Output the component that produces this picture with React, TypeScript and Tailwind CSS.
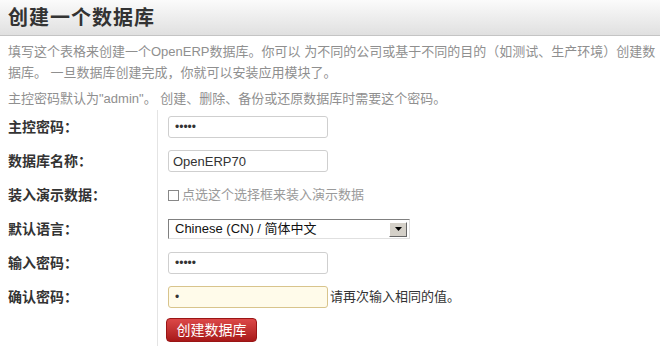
const cjk = 'font-["Liberation_Sans","Noto_Sans_CJK_SC",sans-serif]';

function Row({ label, children }: { label: string; children: React.ReactNode }) {
  return (
    <>
      <div className="flex h-[34px] items-center pl-[8px] text-[14px] font-bold text-[#333]">
        {label}
      </div>
      <div className="flex h-[34px] items-center border-l border-[#e4e4e4] pl-[10px]">
        {children}
      </div>
    </>
  );
}

export default function App() {
  return (
    <div className={`h-[361px] w-[664px] overflow-hidden bg-white ${cjk}`}>
      <div className="flex h-[36px] w-[660px] items-center border-b border-[#c4c4c4] bg-gradient-to-b from-[#fbfbfb] to-[#e0e0e0] pl-[8px]">
        <h1 className="text-[20px] font-bold tracking-[1px] text-[#333]">创建一个数据库</h1>
      </div>

      <div className="px-[8px] pt-[5px] text-[13px] leading-[21px] text-[#8f8f8f]">
        <p>
          填写这个表格来创建一个OpenERP数据库。你可以 为不同的公司或基于不同的目的（如测试、生产环境）创建数据库。 一旦数据库创建完成，你就可以安装应用模块了。
        </p>
        <p className="mt-[5px]">主控密码默认为"admin"。 创建、删除、备份或还原数据库时需要这个密码。</p>
      </div>

      <div className="mt-[1px] grid grid-cols-[157px_1fr]">
        <Row label="主控密码：">
          <input
            type="password"
            defaultValue="admin"
            className="h-[22px] w-[160px] rounded-[3px] border border-[#cfcfcf] px-[6px] text-[12px] text-[#333] outline-none"
          />
        </Row>
        <Row label="数据库名称：">
          <input
            type="text"
            defaultValue="OpenERP70"
            className="h-[22px] w-[160px] rounded-[3px] border border-[#cfcfcf] px-[4px] text-[13px] text-[#333] outline-none"
          />
        </Row>
        <Row label="装入演示数据：">
          <label className="flex items-center gap-[3px] text-[13px] text-[#9a9a9a]">
            <span className="h-[11px] w-[11px] border border-[#888] bg-white" />
            点选这个选择框来装入演示数据
          </label>
        </Row>
        <Row label="默认语言：">
          <div className="flex h-[20px] w-[242px] items-center justify-between border border-t-[#808080] border-l-[#808080] border-r-[#e0e0e0] border-b-[#e0e0e0] bg-white pl-[6px] pr-[2px] text-[13px] text-[#111]">
            <span>Chinese (CN) / 简体中文</span>
            <span className="flex h-[15px] w-[18px] items-center justify-center border border-t-white border-l-white border-r-[#666] border-b-[#666] bg-[#d4d0c8]">
              <svg width="7" height="4" viewBox="0 0 7 4">
                <path d="M0 0h7L3.5 4z" fill="#000" />
              </svg>
            </span>
          </div>
        </Row>
        <Row label="输入密码：">
          <input
            type="password"
            defaultValue="admin"
            className="h-[22px] w-[160px] rounded-[3px] border border-[#cfcfcf] px-[6px] text-[12px] text-[#333] outline-none"
          />
        </Row>
        <Row label="确认密码：">
          <input
            type="password"
            defaultValue="a"
            className="h-[22px] w-[160px] rounded-[3px] border border-[#d8c48c] bg-[#fffbea] px-[6px] text-[12px] text-[#333] outline-none"
          />
          <span className="ml-[2px] text-[13px] text-[#333]">请再次输入相同的值。</span>
        </Row>
        <div />
        <div className="flex h-[32px] items-start border-l border-[#e4e4e4] pl-[8px] pt-[4px]">
          <button className="h-[24px] w-[91px] rounded-[4px] border border-[#9a1515] bg-gradient-to-b from-[#dc4848] to-[#a81818] text-[14px] text-white">
            创建数据库
          </button>
        </div>
      </div>
    </div>
  );
}
